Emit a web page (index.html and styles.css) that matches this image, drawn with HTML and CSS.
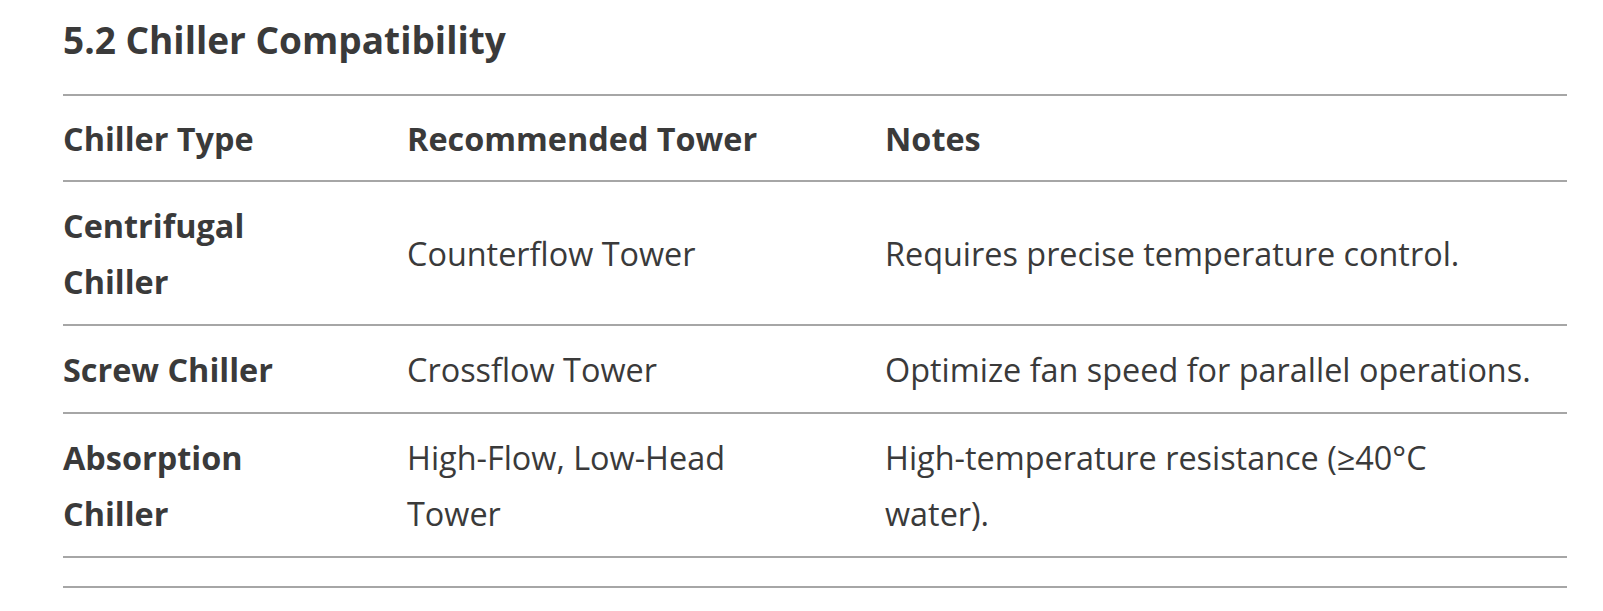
FILE: index.html
```html
<!DOCTYPE html>
<html lang="en">
<head>
<meta charset="utf-8">
<title>5.2 Chiller Compatibility</title>
<link rel="stylesheet" href="styles.css">
</head>
<body>
<section class="doc">
  <h2 class="title">5.2 Chiller Compatibility</h2>
  <table class="compat">
    <colgroup>
      <col class="c1"><col class="c2"><col class="c3">
    </colgroup>
    <thead>
      <tr>
        <th>Chiller Type</th>
        <th>Recommended Tower</th>
        <th>Notes</th>
      </tr>
    </thead>
    <tbody>
      <tr>
        <td class="name">Centrifugal Chiller</td>
        <td class="tower">Counterflow Tower</td>
        <td class="note">Requires precise temperature control.</td>
      </tr>
      <tr>
        <td class="name">Screw Chiller</td>
        <td class="tower">Crossflow Tower</td>
        <td class="note">Optimize fan speed for parallel operations.</td>
      </tr>
      <tr>
        <td class="name">Absorption Chiller</td>
        <td class="tower">High-Flow, Low-Head Tower</td>
        <td class="note">High-temperature resistance (≥40°C water).</td>
      </tr>
      <tr class="empty">
        <td></td><td></td><td></td>
      </tr>
    </tbody>
  </table>
</section>
</body>
</html>
```

FILE: styles.css
```css
html, body {
  margin: 0;
  padding: 0;
  background: #ffffff;
}

body {
  font-family: "Open Sans", "Noto Sans", "Liberation Sans", sans-serif;
  color: #3a3a3a;
}

.doc {
  padding: 0 36px 0 63px;
}

.title {
  margin: 0;
  padding-top: 14px;
  font-size: 37px;
  line-height: 52px;
  font-weight: 700;
  color: #3a3a3a;
  height: 80px;
}

.compat {
  width: 1504px;
  border-collapse: collapse;
  table-layout: fixed;
  font-size: 32.4px;
  line-height: 56px;
}

.c1 { width: 344px; }
.c2 { width: 478px; }
.c3 { width: 682px; }

.compat th,
.compat td {
  text-align: left;
  vertical-align: middle;
  border-top: 2px solid #a6a6a6;
  border-bottom: 2px solid #a6a6a6;
}

.compat th {
  padding: 14px 0;
  font-weight: 700;
}

.compat td {
  padding: 15px 0;
  font-weight: 400;
}

.compat td.name {
  font-weight: 700;
  padding-right: 80px;
}

.compat td.tower {
  padding-right: 96px;
}

.compat td.note {
  padding-right: 32px;
}

.compat .empty td {
  padding: 14px 0;
}
```
